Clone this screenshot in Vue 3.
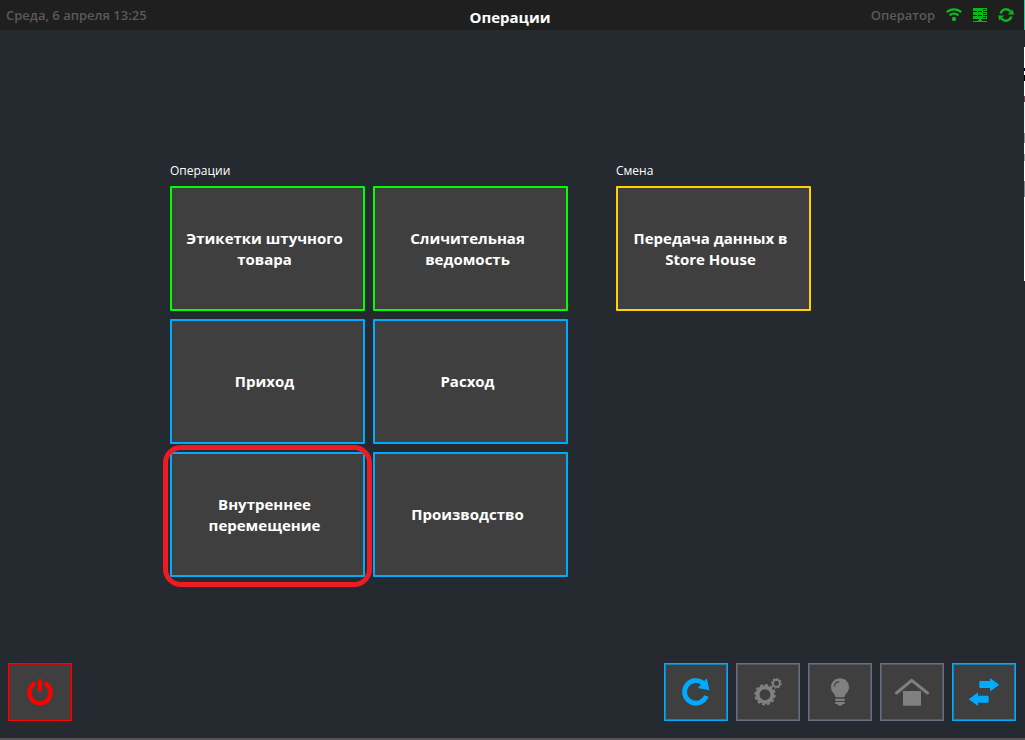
<script setup>
const groups = [
  {
    title: 'Операции',
    columns: 2,
    items: [
      { text: 'Этикетки штучного товара', tone: 'green' },
      { text: 'Сличительная ведомость', tone: 'green' },
      { text: 'Приход', tone: 'blue' },
      { text: 'Расход', tone: 'blue' },
      { text: 'Внутреннее перемещение', tone: 'blue', marked: true },
      { text: 'Производство', tone: 'blue' }
    ]
  },
  {
    title: 'Смена',
    columns: 1,
    items: [{ text: 'Передача данных в Store House', tone: 'yellow' }]
  }
]
</script>

<template>
  <div class="screen">
    <header class="topbar">
      <span class="muted">Среда, 6 апреля 13:25</span>
      <h1>Операции</h1>
      <div class="status">
        <span class="muted">Оператор</span>
        <svg class="wifi" viewBox="0 0 16 14" aria-hidden="true">
          <circle cx="8" cy="11" r="2.2" fill="currentColor" />
          <path d="M3.6 7.400a6.300 6.300 0 0 1 8.800 0M0.800 4.200a10.500 10.500 0 0 1 14.400 0" fill="none" stroke="currentColor" stroke-width="2.400" />
        </svg>
        <svg class="server" viewBox="0 0 14 14" aria-hidden="true">
          <path d="M0 0h14v3H0zM0 4h14v3H0zM0 8h14v3H0zM4 3h1v1H4zM9 3h1v1H9zM4 7h1v1H4zM9 7h1v1H9zM6 11h2v1H6zM0 13h5v-1h4v1h5v1H0z" fill="currentColor" />
          <path d="M10 1.500h3M10 5.500h3M10 9.500h3" stroke="#1f1f1f" stroke-width="1" />
        </svg>
        <svg class="sync" viewBox="0 0 16 14" aria-hidden="true">
          <path d="M2.600 5.500A5.700 5.700 0 0 1 12.600 3.500M13.400 8.500A5.700 5.700 0 0 1 3.400 10.500" fill="none" stroke="currentColor" stroke-width="2.400" />
          <path d="M9.800 6.600H16L14.600 1.600zM6.200 7.400H0L1.400 12.400z" fill="currentColor" />
        </svg>
      </div>
    </header>

    <main class="content">
      <section v-for="g in groups" :key="g.title" class="group">
        <h2>{{ g.title }}</h2>
        <div class="tiles" :class="{ double: g.columns === 2 }">
          <button
            v-for="t in g.items"
            :key="t.text"
            type="button"
            class="tile"
            :class="[t.tone, { marked: t.marked }]"
          >{{ t.text }}</button>
        </div>
      </section>
    </main>

    <footer class="actions">
      <button type="button" class="action red" aria-label="Выключить">
        <svg viewBox="1 1 62 56">
          <path d="M27.2 20.3a10.6 10.6 0 1 0 9.6 0" fill="none" stroke="currentColor" stroke-width="4.4" />
          <path d="M32 17.7v9.3" stroke="currentColor" stroke-width="4" stroke-linecap="round" />
        </svg>
      </button>
      <button type="button" class="action blue push" aria-label="Обновить">
        <svg viewBox="1 1 62 56">
          <path d="M39.5 20.6A11.3 11.3 0 1 0 42.4 33" fill="none" stroke="currentColor" stroke-width="4.8" />
          <path d="M42.7 15.2L45.4 27.3L33.7 25z" fill="currentColor" />
        </svg>
      </button>
      <button type="button" class="action grey" aria-label="Настройки">
        <svg viewBox="1 1 62 56" fill="none" stroke="currentColor">
          <circle cx="29" cy="31.7" r="7.4" stroke-width="3.8" />
          <circle cx="29" cy="31.7" r="9.8" stroke-width="1.8" pathLength="24" stroke-dasharray="1.2 0.8" />
          <circle cx="40.4" cy="20.3" r="3.5" stroke-width="1.9" />
          <circle cx="40.4" cy="20.3" r="4.8" stroke-width="1.1" pathLength="16" stroke-dasharray="1.1 0.9" />
        </svg>
      </button>
      <button type="button" class="action grey" aria-label="Подсветка">
        <svg viewBox="1 1 62 56">
          <path d="M32 15.3c-5.2 0-9 4-9 9 0 4.300 3.300 6 4.500 9.400q.2.600 1 .600h7q.8 0 1-.600c1.200-3.400 4.500-5.100 4.500-9.400 0-5-3.800-9-9-9z" fill="currentColor" />
          <path d="M26.200 23.500c.3-2.600 2.300-4.600 5-4.900" fill="none" stroke="#3f3f3f" stroke-width="1.200" />
          <path d="M28 35.700h8q1 0 1 1.100t-1 1.100h-8q-1 0-1-1.100t1-1.100zM28 39h8q1 0 1 1t-1 1h-1q-.6 1.700-3 1.700t-3-1.700h-1q-1 0-1-1t1-1z" fill="currentColor" />
        </svg>
      </button>
      <button type="button" class="action grey" aria-label="Домой">
        <svg viewBox="1 1 62 56">
          <path d="M16.500 30L31.700 17.300L47.500 30" fill="none" stroke="currentColor" stroke-width="3" stroke-linecap="round" stroke-linejoin="round" />
          <path d="M23 28h18v14.700H23z" fill="currentColor" />
        </svg>
      </button>
      <button type="button" class="action blue" aria-label="Переключить">
        <svg viewBox="1 1 62 56" fill="currentColor">
          <path d="M28.300 18H38v-3l9.400 6.700L38 28.400V25h-9.700q-1 0-1-1v-5q0-1 1-1z" />
          <path d="M35.700 39.700H26v3.300l-9.400-6.700L26 29.600v3.100h9.700q1 0 1 1v5q0 1-1 1z" />
        </svg>
      </button>
    </footer>
    <div class="edge" aria-hidden="true"></div>
  </div>
</template>

<style>
html,
body {
  margin: 0;
  background: #252930;
}
</style>

<style scoped>
.screen {
  position: relative;
  display: flex;
  flex-direction: column;
  box-sizing: border-box;
  min-height: 100vh;
  border-bottom: 2px solid #555;
  background: #252930;
  color: #fff;
  font-family: "Open Sans", "Noto Sans", sans-serif;
}
.topbar {
  display: grid;
  grid-template-columns: 1fr auto 1fr;
  align-items: center;
  height: 30px;
  padding: 0 11px 0 6px;
  background: #1f1f1f;
}
.muted {
  color: #5a5a5a;
  font-size: 13px;
  font-weight: 600;
  line-height: 16px;
}
h1 {
  margin: 4px 0 0;
  font-size: 15px;
  font-weight: 700;
  line-height: 20px;
}
.status {
  display: flex;
  align-items: center;
  justify-content: flex-end;
  gap: 11px;
  color: #0fb520;
}
.status svg {
  height: 14px;
}
.wifi,
.sync {
  width: 16px;
}
.server {
  width: 14px;
}
.content {
  display: flex;
  flex: 1;
  align-items: flex-start;
  gap: 48px;
  padding: 133px 0 24px 170px;
}
h2 {
  margin: 0 0 7px;
  font-size: 12px;
  font-weight: 400;
  line-height: 16px;
}
.tiles {
  display: grid;
  grid-template-columns: 195px;
  grid-auto-rows: 125px;
  gap: 8px;
}
.tiles.double {
  grid-template-columns: 195px 195px;
}
.tile {
  position: relative;
  padding: 0 16px 0 10px;
  border: 2px solid;
  border-radius: 1px;
  background: #3f3f3f;
  color: #fff;
  font: 700 15px/21px "Open Sans", "Noto Sans", sans-serif;
}
.tile.green {
  border-color: #0f0;
}
.tile.blue {
  border-color: #00aaff;
}
.tile.yellow {
  border-color: #ffd200;
}
.marked::after {
  content: "";
  position: absolute;
  z-index: 1;
  inset: -9px -9px -12px;
  border: 5px solid #ed1c24;
  border-radius: 18px;
}
.actions {
  display: flex;
  gap: 8px;
  padding: 0 9px 17px 8px;
}
.action {
  display: flex;
  width: 64px;
  height: 58px;
  padding: 0;
  border: 1px solid;
  background: #3f3f3f;
}
.action svg {
  width: 62px;
  height: 56px;
}
.action.red {
  border-color: #f00;
  box-shadow: inset 0 0 0 1px #b40c0c;
  color: #f00;
}
.action.blue {
  border-color: #00aaff;
  box-shadow: inset 0 0 0 1px #1683bb;
  color: #00aaff;
}
.action.grey {
  border-color: #667080;
  box-shadow: inset 0 0 0 1px #535a64;
  color: #808080;
}
.push {
  margin-left: auto;
}
.edge {
  position: absolute;
  top: 0;
  right: 0;
  width: 1px;
  height: 281px;
  background: linear-gradient(
    #35c9a0 0 30px, #252930 30px 47px, #fff 47px 68px, #003 68px 71px, #fff 71px 75px, #000 75px 81px,
    #fff 81px 96px, #844458 96px 102px, #eee 102px 133px, #999 133px 143px, #fff 143px 154px,
    #aaa 154px 161px, #fff 161px 181px, #8b9092 181px 197px, #fff 197px
  );
}
</style>
